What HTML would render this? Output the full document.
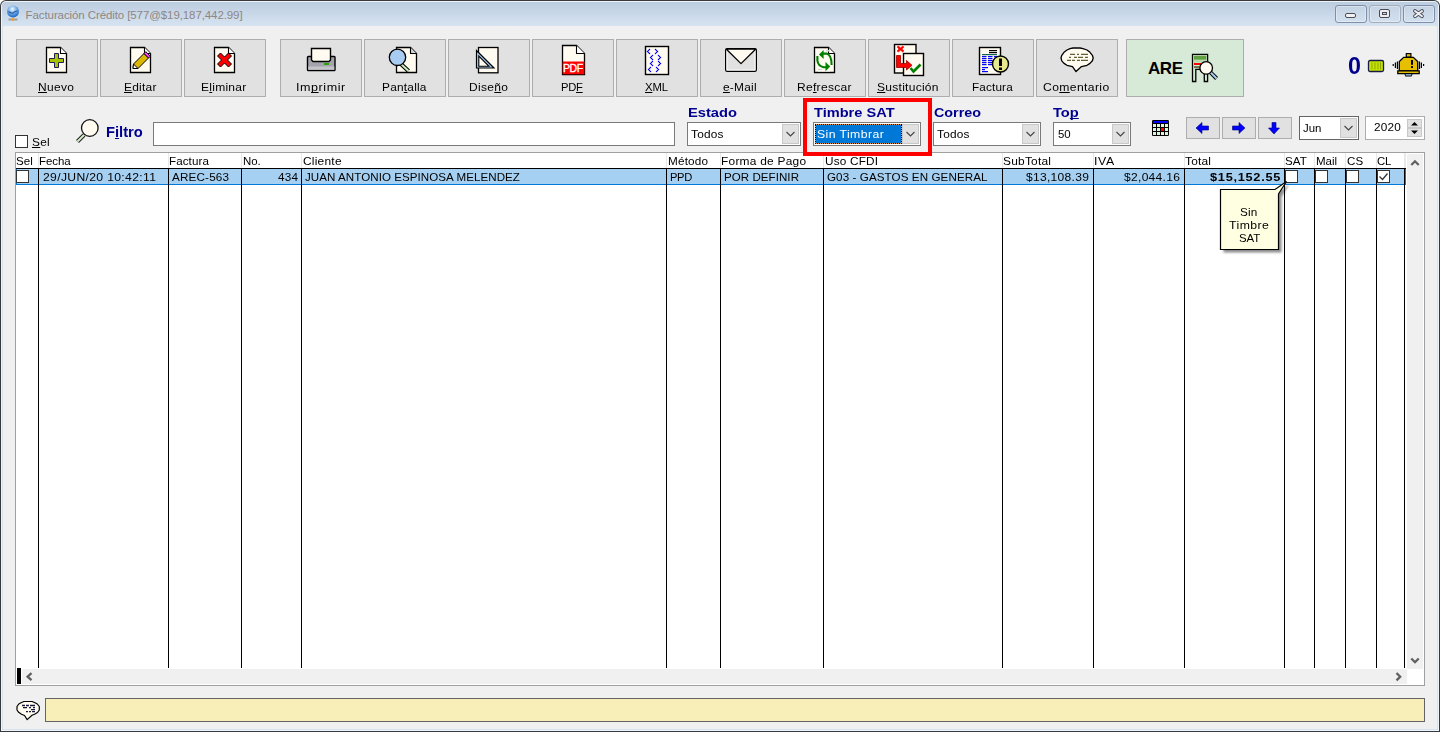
<!DOCTYPE html>
<html><head><meta charset="utf-8">
<style>
*{box-sizing:border-box;margin:0;padding:0}
html,body{width:1440px;height:732px;overflow:hidden;background:#fff;font-family:"Liberation Sans",sans-serif;color:#000}
.a{position:absolute}
.t{position:absolute;white-space:nowrap;line-height:20px}
u{text-decoration:underline;text-underline-offset:1px;text-decoration-thickness:1px;text-decoration-skip-ink:none}
svg{overflow:visible}
</style></head><body>
<div class="a" style="left:0;top:0;width:1440px;height:732px;background:#3a3a3a;border-radius:6px 6px 0 0"></div>
<div class="a" style="left:1px;top:1px;width:1438px;height:730px;background:#eef4fb;border-radius:5px 5px 0 0"></div>
<div class="a" style="left:2px;top:2px;width:1436px;height:728px;background:#d6e3f1;border-radius:4px 4px 0 0"></div>
<div class="a" style="left:2px;top:2px;width:1436px;height:24px;background:linear-gradient(#bccde0,#d6e3f1);border-radius:4px 4px 0 0"></div>
<div class="a" style="left:3px;top:26px;width:1434px;height:703px;background:#f0f0f0"></div>
<svg class="a" style="left:6px;top:5px" width="14" height="18" viewBox="0 0 14 18">
<defs><radialGradient id="gl" cx="0.45" cy="0.3" r="0.75"><stop offset="0" stop-color="#f4faff"/><stop offset="0.35" stop-color="#8ec0f0"/><stop offset="0.8" stop-color="#2f78d0"/><stop offset="1" stop-color="#1c4f9c"/></radialGradient></defs>
<circle cx="7" cy="6.5" r="6" fill="url(#gl)"/>
<path d="M2.5 6.5 Q5 8.5 7 8 Q9 6 11.5 6" stroke="#1a4a90" stroke-width="1.2" fill="none" opacity="0.8"/>
<rect x="2.5" y="13.5" width="9" height="2" fill="#a0a0a0"/><circle cx="7" cy="14.5" r="1.4" fill="#f0a030"/>
</svg>
<div class="t" style="left:25.60px;top:5px;font-size:11.5px;letter-spacing:-0.096px;color:#8e8683;">Facturación Crédito [577@$19,187,442.99]</div>
<div class="a" style="left:1335px;top:5px;width:32px;height:18px;border:1px solid #7f8fa9;border-radius:3px;background:linear-gradient(#c4d3e4,#d3e0ee);box-shadow:inset 0 0 0 1px rgba(255,255,255,0.35)"></div>
<div class="a" style="left:1369px;top:5px;width:32px;height:18px;border:1px solid #a3adba;border-radius:3px;background:linear-gradient(#c4d3e4,#d3e0ee);box-shadow:inset 0 0 0 1px rgba(255,255,255,0.35)"></div>
<div class="a" style="left:1403px;top:5px;width:32px;height:18px;border:1px solid #7f8fa9;border-radius:3px;background:linear-gradient(#c4d3e4,#d3e0ee);box-shadow:inset 0 0 0 1px rgba(255,255,255,0.35)"></div>
<svg class="a" style="left:1335px;top:5px" width="100" height="18" viewBox="0 0 100 18">
<rect x="10.5" y="8.5" width="10" height="4" rx="1.5" fill="#f2f2f2" stroke="#4a4c5a" stroke-width="1"/>
<rect x="44.5" y="4.5" width="10" height="8" rx="1.5" fill="#ececec" stroke="#4a4c5a" stroke-width="1"/>
<rect x="47.5" y="7.5" width="4" height="2" fill="#c8d8ea" stroke="#4a4c5a" stroke-width="1"/>
<path d="M80 6 L87 11.2 M87 6 L80 11.2" stroke="#4a4c5a" stroke-width="3.8" stroke-linecap="round"/>
<path d="M80 6 L87 11.2 M87 6 L80 11.2" stroke="#f0f0f0" stroke-width="2" stroke-linecap="round"/>
</svg>
<div class="a" style="left:16px;top:39px;width:82px;height:58px;border:1px solid #adadad;background:#e1e1e1"></div>
<div class="t" style="left:37.90px;top:77px;font-size:11.5px;letter-spacing:0.330px;color:#000;transform:scaleX(1.0414);transform-origin:0 0;"><u>N</u>uevo</div>
<div class="a" style="left:100px;top:39px;width:82px;height:58px;border:1px solid #adadad;background:#e1e1e1"></div>
<div class="t" style="left:124.20px;top:77px;font-size:11.5px;letter-spacing:0.222px;color:#000;transform:scaleX(1.0383);transform-origin:0 0;"><u>E</u>ditar</div>
<div class="a" style="left:184px;top:39px;width:82px;height:58px;border:1px solid #adadad;background:#e1e1e1"></div>
<div class="t" style="left:201.20px;top:77px;font-size:11.5px;letter-spacing:0.253px;color:#000;transform:scaleX(1.0446);transform-origin:0 0;">E<u>l</u>iminar</div>
<div class="a" style="left:280px;top:39px;width:82px;height:58px;border:1px solid #adadad;background:#e1e1e1"></div>
<div class="t" style="left:295.50px;top:77px;font-size:11.5px;letter-spacing:0.497px;color:#000;transform:scaleX(1.0916);transform-origin:0 0;">Im<u>p</u>rimir</div>
<div class="a" style="left:364px;top:39px;width:82px;height:58px;border:1px solid #adadad;background:#e1e1e1"></div>
<div class="t" style="left:382.20px;top:77px;font-size:11.5px;letter-spacing:0.199px;color:#000;transform:scaleX(1.0345);transform-origin:0 0;">Pan<u>t</u>alla</div>
<div class="a" style="left:448px;top:39px;width:82px;height:58px;border:1px solid #adadad;background:#e1e1e1"></div>
<div class="t" style="left:469.00px;top:77px;font-size:11.5px;letter-spacing:0.302px;color:#000;transform:scaleX(1.0441);transform-origin:0 0;">Dise<u>ñ</u>o</div>
<div class="a" style="left:532px;top:39px;width:82px;height:58px;border:1px solid #adadad;background:#e1e1e1"></div>
<div class="t" style="left:561.40px;top:77px;font-size:11.5px;letter-spacing:-0.282px;color:#000;transform:scaleX(0.9761);transform-origin:0 0;">PD<u>F</u></div>
<div class="a" style="left:616px;top:39px;width:82px;height:58px;border:1px solid #adadad;background:#e1e1e1"></div>
<div class="t" style="left:644.75px;top:77px;font-size:11.5px;letter-spacing:-0.158px;color:#000;transform:scaleX(0.9868);transform-origin:0 0;"><u>X</u>ML</div>
<div class="a" style="left:700px;top:39px;width:82px;height:58px;border:1px solid #adadad;background:#e1e1e1"></div>
<div class="t" style="left:723.30px;top:77px;font-size:11.5px;letter-spacing:0.215px;color:#000;transform:scaleX(1.0355);transform-origin:0 0;"><u>e</u>-Mail</div>
<div class="a" style="left:784px;top:39px;width:82px;height:58px;border:1px solid #adadad;background:#e1e1e1"></div>
<div class="t" style="left:797.10px;top:77px;font-size:11.5px;letter-spacing:0.276px;color:#000;transform:scaleX(1.0464);transform-origin:0 0;">Re<u>f</u>rescar</div>
<div class="a" style="left:868px;top:39px;width:82px;height:58px;border:1px solid #adadad;background:#e1e1e1"></div>
<div class="t" style="left:877.00px;top:77px;font-size:11.5px;letter-spacing:0.251px;color:#000;transform:scaleX(1.0467);transform-origin:0 0;"><u>S</u>ustitución</div>
<div class="a" style="left:952px;top:39px;width:82px;height:58px;border:1px solid #adadad;background:#e1e1e1"></div>
<div class="t" style="left:971.70px;top:77px;font-size:11.5px;letter-spacing:0.137px;color:#000;transform:scaleX(1.0214);transform-origin:0 0;">Factura</div>
<div class="a" style="left:1036px;top:39px;width:82px;height:58px;border:1px solid #adadad;background:#e1e1e1"></div>
<div class="t" style="left:1043.40px;top:77px;font-size:11.5px;letter-spacing:0.352px;color:#000;transform:scaleX(1.0563);transform-origin:0 0;">Co<u>m</u>entario</div>
<div class="a" style="left:1126px;top:39px;width:118px;height:58px;border:1px solid #adadad;background:#d7ead7"></div>
<div class="t" style="left:1148.00px;top:59px;font-size:17px;letter-spacing:-0.438px;color:#000;font-weight:bold;">ARE</div>
<svg class="a" style="left:46px;top:47px" width="21" height="26" viewBox="0 0 21 26"><path d="M0.5 0.5 H14.5 L20.5 6.5 V25.5 H0.5 Z" fill="#fffbf0" stroke="#000" stroke-width="1.3"/><path d="M14.5 0.5 V6.5 H20.5" fill="#fff" stroke="#000" stroke-width="1.1"/><path d="M8.5 6.5 h4 v5 h5 v4 h-5 v5 h-4 v-5 h-5 v-4 h5 z" fill="#a8c400" stroke="#1c1c5c" stroke-width="1"/></svg>
<svg class="a" style="left:130px;top:47px" width="21" height="26" viewBox="0 0 21 26"><path d="M0.5 0.5 H14.5 L20.5 6.5 V25.5 H0.5 Z" fill="#fffbf0" stroke="#000" stroke-width="1.3"/><path d="M14.5 0.5 V6.5 H20.5" fill="#fff" stroke="#000" stroke-width="1.1"/><path d="M3 21.5 L3.5 17 L14 6.5 L18.5 11 L8 21.5 Z" fill="#dcb800" stroke="#000" stroke-width="1"/><path d="M14 6.5 L15.8 4.7 L20.3 9.2 L18.5 11 Z" fill="#ff40ff" stroke="#000" stroke-width="1"/><path d="M3 21.5 L3.5 17 L8 21.5 Z" fill="#fff" stroke="#000" stroke-width="1"/></svg>
<svg class="a" style="left:214px;top:47px" width="21" height="26" viewBox="0 0 21 26"><path d="M0.5 0.5 H14.5 L20.5 6.5 V25.5 H0.5 Z" fill="#fffbf0" stroke="#000" stroke-width="1.3"/><path d="M14.5 0.5 V6.5 H20.5" fill="#fff" stroke="#000" stroke-width="1.1"/><path d="M3.5 7 L6.5 4 L10.5 8 L14.5 4 L17.5 7 L13.5 11 L17.5 15 L14.5 18 L10.5 14 L6.5 18 L3.5 15 L7.5 11 Z" transform="translate(0,2)" fill="#ff0000" stroke="#000" stroke-width="1"/></svg>
<svg class="a" style="left:306px;top:47px" width="31" height="25" viewBox="0 0 31 25"><rect x="1.5" y="9.5" width="27.5" height="14" rx="0.8" fill="#a4a4ac" stroke="#000" stroke-width="1.4"/><rect x="2.3" y="19.5" width="26" height="3.3" fill="#c4c4c8"/><path d="M5.5 1.5 H24.5 V13 L23 14.5 H7 L5.5 13 Z" fill="#fffbf0" stroke="#000" stroke-width="1.4"/><rect x="18" y="16" width="5" height="2" fill="#30a010"/></svg>
<svg class="a" style="left:387px;top:46px" width="31" height="28" viewBox="0 0 31 28"><path d="M9.5 1.5 H23.5 L29.5 7.5 V26.5 H9.5 Z" fill="#fffbf0" stroke="#000" stroke-width="1.3"/><path d="M23.5 1.5 V7.5 H29.5" fill="#d4d4d4" stroke="#000" stroke-width="1.1"/><path d="M13.5 17.5 L21.5 25" stroke="#000" stroke-width="4.2"/><path d="M13.5 17.5 L21.5 25" stroke="#c8ecc0" stroke-width="2"/><circle cx="10.5" cy="11.3" r="8.2" fill="#a8ccf2" stroke="#000" stroke-width="1.3"/></svg>
<svg class="a" style="left:475px;top:46px" width="25" height="28" viewBox="0 0 25 28"><rect x="3.5" y="1.5" width="19.5" height="25.3" fill="#fffbf0" stroke="#000" stroke-width="1.3"/><path d="M1.5 4.5 L1.5 22 L19 22 Z" fill="#a8cff5" stroke="#000" stroke-width="1.2"/><path d="M3.8 10 L3.8 20.3 L14 20.3 Z" fill="#fffbf0" stroke="#000" stroke-width="1.1"/></svg>
<svg class="a" style="left:561px;top:44px" width="25" height="32" viewBox="0 0 25 32"><path d="M1.5 1.5 H15.5 L23.5 9.5 V30.5 H1.5 Z" fill="#fffbf0" stroke="#000" stroke-width="1.3"/><path d="M15.5 1.5 V9.5 H23.5" fill="#fff" stroke="#000" stroke-width="1.1"/><rect x="1.7" y="17.5" width="21.6" height="12.8" fill="#ff0000"/><text x="11.8" y="27.8" text-anchor="middle" font-family="Liberation Sans" font-size="10.5" fill="#fff" stroke="#fff" stroke-width="0.3" letter-spacing="-0.5">PDF</text></svg>
<svg class="a" style="left:644px;top:45px" width="26" height="31" viewBox="0 0 26 31"><rect x="1.5" y="1.5" width="23" height="28" fill="#fffbf0" stroke="#000" stroke-width="1.4"/><rect x="4.85" y="3.85" width="1.3" height="1.3" fill="#0000ff"/><rect x="10.85" y="3.85" width="1.3" height="1.3" fill="#0000ff"/><rect x="3.85" y="4.85" width="1.3" height="1.3" fill="#0000ff"/><rect x="11.85" y="4.85" width="1.3" height="1.3" fill="#0000ff"/><rect x="2.85" y="5.85" width="1.3" height="1.3" fill="#0000ff"/><rect x="12.85" y="5.85" width="1.3" height="1.3" fill="#0000ff"/><rect x="3.85" y="6.85" width="1.3" height="1.3" fill="#0000ff"/><rect x="11.85" y="6.85" width="1.3" height="1.3" fill="#0000ff"/><rect x="4.85" y="7.85" width="1.3" height="1.3" fill="#0000ff"/><rect x="10.85" y="7.85" width="1.3" height="1.3" fill="#0000ff"/><rect x="7.85" y="9.85" width="1.3" height="1.3" fill="#0000ff"/><rect x="13.85" y="9.85" width="1.3" height="1.3" fill="#0000ff"/><rect x="6.85" y="10.85" width="1.3" height="1.3" fill="#0000ff"/><rect x="14.85" y="10.85" width="1.3" height="1.3" fill="#0000ff"/><rect x="5.85" y="11.85" width="1.3" height="1.3" fill="#0000ff"/><rect x="15.85" y="11.85" width="1.3" height="1.3" fill="#0000ff"/><rect x="6.85" y="12.85" width="1.3" height="1.3" fill="#0000ff"/><rect x="14.85" y="12.85" width="1.3" height="1.3" fill="#0000ff"/><rect x="7.85" y="13.85" width="1.3" height="1.3" fill="#0000ff"/><rect x="13.85" y="13.85" width="1.3" height="1.3" fill="#0000ff"/><rect x="7.85" y="15.85" width="1.3" height="1.3" fill="#0000ff"/><rect x="13.85" y="15.85" width="1.3" height="1.3" fill="#0000ff"/><rect x="6.85" y="16.85" width="1.3" height="1.3" fill="#0000ff"/><rect x="14.85" y="16.85" width="1.3" height="1.3" fill="#0000ff"/><rect x="5.85" y="17.85" width="1.3" height="1.3" fill="#0000ff"/><rect x="15.85" y="17.85" width="1.3" height="1.3" fill="#0000ff"/><rect x="6.85" y="18.85" width="1.3" height="1.3" fill="#0000ff"/><rect x="14.85" y="18.85" width="1.3" height="1.3" fill="#0000ff"/><rect x="7.85" y="19.85" width="1.3" height="1.3" fill="#0000ff"/><rect x="13.85" y="19.85" width="1.3" height="1.3" fill="#0000ff"/><rect x="5.85" y="21.85" width="1.3" height="1.3" fill="#0000ff"/><rect x="11.85" y="21.85" width="1.3" height="1.3" fill="#0000ff"/><rect x="4.85" y="22.85" width="1.3" height="1.3" fill="#0000ff"/><rect x="12.85" y="22.85" width="1.3" height="1.3" fill="#0000ff"/><rect x="3.85" y="23.85" width="1.3" height="1.3" fill="#0000ff"/><rect x="13.85" y="23.85" width="1.3" height="1.3" fill="#0000ff"/><rect x="4.85" y="24.85" width="1.3" height="1.3" fill="#0000ff"/><rect x="12.85" y="24.85" width="1.3" height="1.3" fill="#0000ff"/><rect x="5.85" y="25.85" width="1.3" height="1.3" fill="#0000ff"/><rect x="11.85" y="25.85" width="1.3" height="1.3" fill="#0000ff"/></svg>
<svg class="a" style="left:724px;top:47px" width="35" height="26" viewBox="0 0 35 26"><rect x="1.7" y="1.7" width="30.6" height="22.6" rx="1.5" fill="#e1e1e1" stroke="#000" stroke-width="1.4"/><rect x="2.9" y="2.9" width="28.2" height="20.2" fill="none" stroke="#fff" stroke-width="1"/><path d="M2.4 2.2 L17 16.6 L31.6 2.2 Z" fill="#fffbf0" stroke="#000" stroke-width="1.3" stroke-linejoin="round"/></svg>
<svg class="a" style="left:814px;top:47px" width="21" height="26" viewBox="0 0 21 26"><path d="M0.5 0.5 H14.5 L20.5 6.5 V25.5 H0.5 Z" fill="#fffbf0" stroke="#000" stroke-width="1.3"/><path d="M14.5 0.5 V6.5 H20.5" fill="#fff" stroke="#000" stroke-width="1.1"/><path d="M3 28" /><rect x="4" y="22" width="4" height="1" fill="#d0d0d0"/><rect x="4" y="24" width="12" height="1" fill="#d8d8d8"/><rect x="12" y="3" width="4" height="1.5" fill="#d8d8d8"/><path d="M5 7.4 L9.6 2.9 V12 Z" fill="#008000"/><path d="M9 6.6 H12.5 Q17.6 8 17.6 18" stroke="#008000" stroke-width="2.1" fill="none"/><path d="M3.4 9 V13.5 Q4 19 9.5 20.2 H12" stroke="#008000" stroke-width="2.1" fill="none"/><path d="M16.2 19.5 L11.5 15 V24.2 Z" fill="#008000"/></svg>
<svg class="a" style="left:893px;top:43px" width="32" height="34" viewBox="0 0 32 34"><rect x="1.5" y="1.5" width="21.5" height="28.5" fill="#fffbf0" stroke="#000" stroke-width="1.4"/><path d="M4 4 L5.5 3 L7.5 5 L9.5 3 L11 4 L9 6 L11 8 L9.5 9 L7.5 7 L5.5 9 L4 8 L6 6 Z" fill="#ff0000" stroke="#ff0000" stroke-width="0.6"/><rect x="10.5" y="10.5" width="20" height="22" fill="#fffbf0" stroke="#000" stroke-width="1.4"/><path d="M3.5 12.5 H7.5 V20.5 H13.5 V17.5 L19 22.3 L13.5 27 V24.5 H3.5 Z" fill="#ff0000" stroke="#900" stroke-width="0.8"/><path d="M17.5 25 L20.5 28.5 L27.5 21.5" stroke="#008000" stroke-width="2.6" fill="none"/></svg>
<svg class="a" style="left:978px;top:46px" width="36" height="30" viewBox="0 0 36 30"><rect x="1.5" y="1.5" width="21" height="27" fill="#fffbf0" stroke="#000" stroke-width="1.4"/><rect x="11" y="4" width="8" height="1.2" fill="#000"/><rect x="11" y="6" width="8" height="1.2" fill="#000"/><rect x="4" y="8" width="15" height="1.2" fill="#106060"/><rect x="4" y="10" width="4.5" height="1.2" fill="#0000ff"/><rect x="10" y="10" width="4.5" height="1.2" fill="#0000ff"/><rect x="16" y="10" width="4.5" height="1.2" fill="#0000ff"/><rect x="4" y="12" width="4.5" height="1.2" fill="#0000ff"/><rect x="10" y="12" width="4.5" height="1.2" fill="#0000ff"/><rect x="16" y="12" width="4.5" height="1.2" fill="#0000ff"/><rect x="4" y="14" width="4.5" height="1.2" fill="#0000ff"/><rect x="10" y="14" width="4.5" height="1.2" fill="#0000ff"/><rect x="16" y="14" width="4.5" height="1.2" fill="#0000ff"/><rect x="4" y="16" width="4.5" height="1.2" fill="#0000ff"/><rect x="10" y="16" width="4.5" height="1.2" fill="#0000ff"/><rect x="16" y="16" width="4.5" height="1.2" fill="#0000ff"/><rect x="4" y="18" width="4.5" height="1.2" fill="#0000ff"/><rect x="10" y="18" width="4.5" height="1.2" fill="#0000ff"/><rect x="16" y="18" width="4.5" height="1.2" fill="#0000ff"/><rect x="4" y="21" width="6" height="1.2" fill="#0000ff"/><rect x="4" y="23" width="3" height="1.2" fill="#0000ff"/><rect x="4" y="25" width="6" height="1.2" fill="#0000ff"/><circle cx="22.5" cy="18" r="8" fill="#e8e890" stroke="#000" stroke-width="1.4"/><rect x="21" y="12.5" width="3" height="7.5" fill="#000"/><rect x="21" y="21.5" width="3" height="2.5" fill="#000"/></svg>
<svg class="a" style="left:1060px;top:46px" width="35" height="27" viewBox="0 0 35 27"><path d="M13 2 H20 L23 2.6 L27 4 L30 6.3 L32.4 9.3 L33.2 12 L32.4 14.8 L30 17.4 L27 19.3 L21.5 20.6 L16 25.6 L12.5 20.6 L7 19.3 L4 17.4 L1.8 14.8 L1 12 L1.8 9.3 L4 6.3 L7 4 L10 2.6 Z" fill="#fffbf0" stroke="#000" stroke-width="1.3" stroke-linejoin="round"/><path d="M10 8.3 H15 M17 8.3 H19 M21 8.3 H28 M9 11.4 H11 M14 11.4 H17 M18 11.4 H23 M25 11.4 H28 M7 14.4 H11 M12 14.4 H15 M17 14.4 H20 M21 14.4 H28" stroke="#62603a" stroke-width="1.3"/></svg>
<svg class="a" style="left:1190px;top:52px" width="30" height="32" viewBox="0 0 30 32"><path d="M2.5 2.3 H17.6 V29.5 H14.3 V17.3 H5.8 V29.5 H2.5 Z" fill="#cfe9cc" stroke="#000" stroke-width="1.3"/><rect x="4" y="3.7" width="12.3" height="4" fill="#60a040"/><rect x="4" y="8" width="12.3" height="2.5" fill="#b8d8b0"/><rect x="4" y="11" width="7" height="2" fill="#ff0000"/><rect x="4" y="14.2" width="7" height="1.7" fill="#606040"/><path d="M20.5 20.3 L26.6 26.5" stroke="#000" stroke-width="4"/><path d="M20.5 20.3 L26.6 26.5" stroke="#a8ccf2" stroke-width="2"/><circle cx="16.2" cy="15.9" r="6.3" fill="#fffbf0" stroke="#000" stroke-width="1.3"/></svg>
<div class="t" style="left:1348.25px;top:57px;font-size:22px;letter-spacing:0.000px;color:#00008c;font-weight:bold;transform:scale(1.06,1.07);transform-origin:0 100%;">0</div>
<svg class="a" style="left:1367px;top:59px" width="18" height="14" viewBox="0 0 18 14"><rect x="1.5" y="1.5" width="15" height="11" rx="1.5" fill="#c4e400" stroke="#1a1a48" stroke-width="1.3"/><rect x="4.5" y="3.5" width="0.9" height="7" fill="#8aa000"/><rect x="7.5" y="3.5" width="0.9" height="7" fill="#8aa000"/><rect x="10.5" y="3.5" width="0.9" height="7" fill="#8aa000"/><rect x="13" y="3.5" width="0.9" height="7" fill="#8aa000"/></svg>
<svg class="a" style="left:1391px;top:52px" width="36" height="26" viewBox="0 0 36 26"><path d="M12.7 5.3 H22.3 L26.7 9.6 V19 H8.3 V9.6 Z" fill="#e6c000" stroke="#000" stroke-width="1.3" stroke-linejoin="miter"/><rect x="15.3" y="1.6" width="4.6" height="3.4" fill="#e6c000" stroke="#000" stroke-width="1.2"/><rect x="6.8" y="18.9" width="21.4" height="2.7" fill="#f0c800" stroke="#000" stroke-width="1.3"/><path d="M13.2 21.6 H21.8 L20.6 24.4 H14.4 Z" fill="#000"/><rect x="14.6" y="22.2" width="5.8" height="1.3" fill="#a8ccf0"/><rect x="20" y="8" width="2" height="4.8" fill="#000"/><rect x="20" y="14.1" width="2" height="1.9" fill="#000"/><rect x="1.6" y="12" width="1.2" height="2" fill="#000"/><rect x="3.8" y="10.5" width="1.2" height="5.5" fill="#000"/><rect x="5.8" y="9.5" width="1.2" height="7.5" fill="#000"/><rect x="27.9" y="9.5" width="1.2" height="7.5" fill="#000"/><rect x="29.8" y="10.5" width="1.2" height="5.5" fill="#000"/><rect x="32" y="12" width="1.2" height="2" fill="#000"/></svg>
<div class="a" style="left:15px;top:135px;width:13px;height:13px;border:1px solid #333;background:#fff;"></div>
<div class="t" style="left:32.00px;top:132px;font-size:11.5px;letter-spacing:0.272px;color:#000;transform:scaleX(1.0338);transform-origin:0 0;"><u>S</u>el</div>
<svg class="a" style="left:74px;top:117px" width="28" height="28" viewBox="0 0 28 28"><path d="M3.5 24.5 L10 18" stroke="#222" stroke-width="4" /><path d="M3.5 24.5 L10 18" stroke="#d4ecc8" stroke-width="2"/><circle cx="15.8" cy="11" r="8.3" fill="#fffbf0" stroke="#111" stroke-width="1.3"/></svg>
<div class="t" style="left:106.00px;top:122px;font-size:14px;letter-spacing:0.000px;color:#000090;font-weight:bold;transform:scaleX(1.0500);transform-origin:0 0;">F<u>i</u>ltro</div>
<div class="a" style="left:153px;top:122px;width:522px;height:24px;border:1px solid #7a7a7a;background:#fff"></div>
<div class="t" style="left:687.80px;top:103px;font-size:13px;letter-spacing:0.000px;color:#000090;font-weight:bold;transform:scaleX(1.1297);transform-origin:0 0;">Estado</div>
<div class="a" style="left:687px;top:122px;width:114px;height:24px;border:1px solid #7a7a7a;background:#fff"></div>
<div class="a" style="left:782px;top:124px;width:17px;height:20px;border:1px solid #c8c8c8;background:#e1e1e1"></div>
<svg class="a" style="left:782px;top:124px" width="17" height="20" viewBox="0 0 17 20"><path d="M4.5 8.0 L8.5 12.0 L12.5 8.0" stroke="#444" stroke-width="1.1" fill="none"/></svg>
<div class="t" style="left:691.30px;top:124px;font-size:11.5px;letter-spacing:0.224px;color:#000;transform:scaleX(1.0301);transform-origin:0 0;">Todos</div>
<div class="t" style="left:813.75px;top:103px;font-size:13px;letter-spacing:0.000px;color:#000090;font-weight:bold;transform:scaleX(1.1233);transform-origin:0 0;">Timbre SAT</div>
<div class="a" style="left:813px;top:122px;width:108px;height:24px;border:1px solid #7a7a7a;background:#fff"></div>
<div class="a" style="left:902px;top:124px;width:17px;height:20px;border:1px solid #c8c8c8;background:#e1e1e1"></div>
<svg class="a" style="left:902px;top:124px" width="17" height="20" viewBox="0 0 17 20"><path d="M4.5 8.0 L8.5 12.0 L12.5 8.0" stroke="#444" stroke-width="1.1" fill="none"/></svg>
<div class="a" style="left:815px;top:124px;width:87px;height:20px;background:#e89a3a"></div>
<div class="a" style="left:815px;top:124px;width:87px;height:20px;background:#0078d7;background-clip:padding-box;border:1px dotted #000"></div>
<div class="t" style="left:817.30px;top:124px;font-size:11.5px;letter-spacing:0.372px;color:#fff;transform:scaleX(1.0677);transform-origin:0 0;">Sin Timbrar</div>
<div class="t" style="left:934.00px;top:103px;font-size:13px;letter-spacing:0.000px;color:#000090;font-weight:bold;transform:scaleX(1.1026);transform-origin:0 0;">Correo</div>
<div class="a" style="left:933px;top:122px;width:108px;height:24px;border:1px solid #7a7a7a;background:#fff"></div>
<div class="a" style="left:1022px;top:124px;width:17px;height:20px;border:1px solid #c8c8c8;background:#e1e1e1"></div>
<svg class="a" style="left:1022px;top:124px" width="17" height="20" viewBox="0 0 17 20"><path d="M4.5 8.0 L8.5 12.0 L12.5 8.0" stroke="#444" stroke-width="1.1" fill="none"/></svg>
<div class="t" style="left:937.10px;top:124px;font-size:11.5px;letter-spacing:0.224px;color:#000;transform:scaleX(1.0301);transform-origin:0 0;">Todos</div>
<div class="t" style="left:1053.10px;top:103px;font-size:13px;letter-spacing:0.000px;color:#000090;font-weight:bold;transform:scaleX(1.1279);transform-origin:0 0;">To<u>p</u></div>
<div class="a" style="left:1053px;top:122px;width:78px;height:24px;border:1px solid #7a7a7a;background:#fff"></div>
<div class="a" style="left:1112px;top:124px;width:17px;height:20px;border:1px solid #c8c8c8;background:#e1e1e1"></div>
<svg class="a" style="left:1112px;top:124px" width="17" height="20" viewBox="0 0 17 20"><path d="M4.5 8.0 L8.5 12.0 L12.5 8.0" stroke="#444" stroke-width="1.1" fill="none"/></svg>
<div class="t" style="left:1057.60px;top:124px;font-size:11.5px;letter-spacing:-0.075px;color:#000;transform:scaleX(0.9941);transform-origin:0 0;">50</div>
<svg class="a" style="left:1152px;top:120px" width="17" height="16" viewBox="0 0 17 16"><rect x="0" y="0" width="17" height="16" rx="1.2" fill="#000"/><rect x="1" y="1" width="15" height="2" fill="#0000ff"/><rect x="1" y="4" width="3" height="3" fill="#dcf4d8"/><rect x="5" y="4" width="3" height="3" fill="#dcf4d8"/><rect x="9" y="4" width="3" height="3" fill="#dcf4d8"/><rect x="13" y="4" width="3" height="3" fill="#dcf4d8"/><rect x="1" y="8" width="3" height="3" fill="#dcf4d8"/><rect x="5" y="8" width="3" height="3" fill="#dcf4d8"/><rect x="9" y="8" width="3" height="3" fill="#ff0000"/><rect x="13" y="8" width="3" height="3" fill="#dcf4d8"/><rect x="1" y="12" width="3" height="3" fill="#dcf4d8"/><rect x="5" y="12" width="3" height="3" fill="#dcf4d8"/><rect x="9" y="12" width="3" height="3" fill="#dcf4d8"/><rect x="13" y="12" width="3" height="3" fill="#dcf4d8"/></svg>
<div class="a" style="left:1186px;top:117px;width:34px;height:22px;border:1px solid #adadad;background:#e1e1e1"></div>
<div class="a" style="left:1222px;top:117px;width:34px;height:22px;border:1px solid #adadad;background:#e1e1e1"></div>
<div class="a" style="left:1258px;top:117px;width:34px;height:22px;border:1px solid #adadad;background:#e1e1e1"></div>
<svg class="a" style="left:1186px;top:117px" width="106" height="22" viewBox="0 0 106 22"><path d="M10 11 L16 5.5 V9 H22.5 V13 H16 V16.5 Z" fill="#0000ff" stroke="#000080" stroke-width="0.6"/><path d="M59 11 L53 5.5 V9 H46.5 V13 H53 V16.5 Z" fill="#0000ff" stroke="#000080" stroke-width="0.6"/><path d="M88 17 L82.5 11 H86 V5.5 H90 V11 H93.5 Z" fill="#0000ff" stroke="#000080" stroke-width="0.6"/></svg>
<div class="a" style="left:1299px;top:116px;width:60px;height:24px;border:1px solid #646464;background:#fff"></div>
<div class="a" style="left:1340px;top:118px;width:17px;height:20px;border:1px solid #c8c8c8;background:#e1e1e1"></div>
<svg class="a" style="left:1340px;top:118px" width="17" height="20" viewBox="0 0 17 20"><path d="M4.5 8.0 L8.5 12.0 L12.5 8.0" stroke="#444" stroke-width="1.1" fill="none"/></svg>
<div class="t" style="left:1303.00px;top:118px;font-size:11.5px;letter-spacing:-0.063px;color:#000;transform:scaleX(0.9932);transform-origin:0 0;">Jun</div>
<div class="a" style="left:1365px;top:116px;width:60px;height:24px;border:1px solid #adadad;background:#fff"></div>
<div class="t" style="left:1374.40px;top:117px;font-size:11.5px;letter-spacing:0.199px;color:#000;transform:scaleX(1.0239);transform-origin:0 0;">2020</div>
<div class="a" style="left:1407px;top:119px;width:15px;height:9px;border:1px solid #c8c8c8;background:#e1e1e1"></div>
<div class="a" style="left:1407px;top:128px;width:15px;height:9px;border:1px solid #c8c8c8;background:#e1e1e1"></div>
<svg class="a" style="left:1407px;top:119px" width="15" height="18" viewBox="0 0 15 18"><path d="M4 6.5 L7.5 3 L11 6.5 Z M4 11.5 L7.5 15 L11 11.5 Z" fill="#000"/></svg>
<div class="a" style="left:15px;top:152px;width:1410px;height:534px;border:1px solid #a0a0a0;background:#fff"></div>
<div class="a" style="left:16px;top:168px;width:1390px;height:1px;background:#000"></div>
<div class="a" style="left:1405px;top:153px;width:1px;height:15px;background:#e8e8e8"></div>
<div class="a" style="left:16px;top:169px;width:1390px;height:16px;background:#a6d0f2;border-left:1px solid #0078d7;border-right:1px solid #0078d7;border-bottom:1px solid #0078d7"></div>
<div class="a" style="left:38px;top:169px;width:1px;height:499px;background:#000"></div>
<div class="a" style="left:38px;top:153px;width:1px;height:15px;background:#e8e8e8"></div>
<div class="a" style="left:168px;top:169px;width:1px;height:499px;background:#000"></div>
<div class="a" style="left:168px;top:153px;width:1px;height:15px;background:#e8e8e8"></div>
<div class="a" style="left:241px;top:169px;width:1px;height:499px;background:#000"></div>
<div class="a" style="left:241px;top:153px;width:1px;height:15px;background:#e8e8e8"></div>
<div class="a" style="left:301px;top:169px;width:1px;height:499px;background:#000"></div>
<div class="a" style="left:301px;top:153px;width:1px;height:15px;background:#e8e8e8"></div>
<div class="a" style="left:666px;top:169px;width:1px;height:499px;background:#000"></div>
<div class="a" style="left:666px;top:153px;width:1px;height:15px;background:#e8e8e8"></div>
<div class="a" style="left:720px;top:169px;width:1px;height:499px;background:#000"></div>
<div class="a" style="left:720px;top:153px;width:1px;height:15px;background:#e8e8e8"></div>
<div class="a" style="left:823px;top:169px;width:1px;height:499px;background:#000"></div>
<div class="a" style="left:823px;top:153px;width:1px;height:15px;background:#e8e8e8"></div>
<div class="a" style="left:1002px;top:169px;width:1px;height:499px;background:#000"></div>
<div class="a" style="left:1002px;top:153px;width:1px;height:15px;background:#e8e8e8"></div>
<div class="a" style="left:1093px;top:169px;width:1px;height:499px;background:#000"></div>
<div class="a" style="left:1093px;top:153px;width:1px;height:15px;background:#e8e8e8"></div>
<div class="a" style="left:1184px;top:169px;width:1px;height:499px;background:#000"></div>
<div class="a" style="left:1184px;top:153px;width:1px;height:15px;background:#e8e8e8"></div>
<div class="a" style="left:1284px;top:169px;width:1px;height:499px;background:#000"></div>
<div class="a" style="left:1284px;top:153px;width:1px;height:15px;background:#e8e8e8"></div>
<div class="a" style="left:1314px;top:169px;width:1px;height:499px;background:#000"></div>
<div class="a" style="left:1314px;top:153px;width:1px;height:15px;background:#e8e8e8"></div>
<div class="a" style="left:1345px;top:169px;width:1px;height:499px;background:#000"></div>
<div class="a" style="left:1345px;top:153px;width:1px;height:15px;background:#e8e8e8"></div>
<div class="a" style="left:1376px;top:169px;width:1px;height:499px;background:#000"></div>
<div class="a" style="left:1376px;top:153px;width:1px;height:15px;background:#e8e8e8"></div>
<div class="a" style="left:1404px;top:169px;width:1px;height:499px;background:#000"></div>
<div class="a" style="left:1404px;top:153px;width:1px;height:15px;background:#e8e8e8"></div>
<div class="t" style="left:16.40px;top:151px;font-size:11.5px;letter-spacing:0.044px;color:#000;transform:scaleX(1.0053);transform-origin:0 0;">Sel</div>
<div class="t" style="left:39.40px;top:151px;font-size:11.5px;letter-spacing:-0.028px;color:#000;transform:scaleX(0.9965);transform-origin:0 0;">Fecha</div>
<div class="t" style="left:169.40px;top:151px;font-size:11.5px;letter-spacing:0.072px;color:#000;transform:scaleX(1.0112);transform-origin:0 0;">Factura</div>
<div class="t" style="left:242.60px;top:151px;font-size:11.5px;letter-spacing:-0.044px;color:#000;transform:scaleX(0.9951);transform-origin:0 0;">No.</div>
<div class="t" style="left:302.80px;top:151px;font-size:11.5px;letter-spacing:0.221px;color:#000;transform:scaleX(1.0385);transform-origin:0 0;">Cliente</div>
<div class="t" style="left:667.50px;top:151px;font-size:11.5px;letter-spacing:0.159px;color:#000;transform:scaleX(1.0212);transform-origin:0 0;">Método</div>
<div class="t" style="left:721.25px;top:151px;font-size:11.5px;letter-spacing:0.231px;color:#000;transform:scaleX(1.0363);transform-origin:0 0;">Forma de Pago</div>
<div class="t" style="left:824.60px;top:151px;font-size:11.5px;letter-spacing:0.174px;color:#000;transform:scaleX(1.0248);transform-origin:0 0;">Uso CFDI</div>
<div class="t" style="left:1003.20px;top:151px;font-size:11.5px;letter-spacing:0.224px;color:#000;transform:scaleX(1.0363);transform-origin:0 0;">SubTotal</div>
<div class="t" style="left:1094.40px;top:151px;font-size:11.5px;letter-spacing:0.595px;color:#000;transform:scaleX(1.0718);transform-origin:0 0;">IVA</div>
<div class="t" style="left:1185.40px;top:151px;font-size:11.5px;letter-spacing:0.199px;color:#000;transform:scaleX(1.0340);transform-origin:0 0;">Total</div>
<div class="t" style="left:1285.10px;top:151px;font-size:11.5px;letter-spacing:0.050px;color:#000;transform:scaleX(1.0047);transform-origin:0 0;">SAT</div>
<div class="t" style="left:1315.50px;top:151px;font-size:11.5px;letter-spacing:0.012px;color:#000;transform:scaleX(1.0018);transform-origin:0 0;">Mail</div>
<div class="t" style="left:1346.50px;top:151px;font-size:11.5px;letter-spacing:0.099px;color:#000;transform:scaleX(1.0063);transform-origin:0 0;">CS</div>
<div class="t" style="left:1377.40px;top:151px;font-size:11.5px;letter-spacing:-0.177px;color:#000;transform:scaleX(0.9881);transform-origin:0 0;">CL</div>
<div class="t" style="left:42.50px;top:167px;font-size:11.5px;letter-spacing:0.320px;color:#000;transform:scaleX(1.0567);transform-origin:0 0;">29/JUN/20 10:42:11</div>
<div class="t" style="left:172.20px;top:167px;font-size:11.5px;letter-spacing:0.140px;color:#000;transform:scaleX(1.0182);transform-origin:0 0;">AREC-563</div>
<div class="t" style="left:277.50px;top:167px;font-size:11.5px;letter-spacing:0.184px;color:#000;transform:scaleX(1.0195);transform-origin:0 0;">434</div>
<div class="t" style="left:305.00px;top:167px;font-size:11.5px;letter-spacing:0.051px;color:#000;transform:scaleX(1.0071);transform-origin:0 0;">JUAN ANTONIO ESPINOSA MELENDEZ</div>
<div class="t" style="left:670.30px;top:167px;font-size:11.5px;letter-spacing:-0.367px;color:#000;transform:scaleX(0.9698);transform-origin:0 0;">PPD</div>
<div class="t" style="left:724.40px;top:167px;font-size:11.5px;letter-spacing:0.043px;color:#000;transform:scaleX(1.0059);transform-origin:0 0;">POR DEFINIR</div>
<div class="t" style="left:827.30px;top:167px;font-size:11.5px;letter-spacing:0.079px;color:#000;transform:scaleX(1.0111);transform-origin:0 0;">G03 - GASTOS EN GENERAL</div>
<div class="t" style="left:1026.30px;top:167px;font-size:11.5px;letter-spacing:0.285px;color:#000;transform:scaleX(1.0466);transform-origin:0 0;">$13,108.39</div>
<div class="t" style="left:1124.40px;top:167px;font-size:11.5px;letter-spacing:0.285px;color:#000;transform:scaleX(1.0467);transform-origin:0 0;">$2,044.16</div>
<div class="t" style="left:1209.60px;top:167px;font-size:11.5px;letter-spacing:0.639px;color:#000;font-weight:bold;transform:scaleX(1.1108);transform-origin:0 0;">$15,152.55</div>
<div class="a" style="left:16px;top:170px;width:13px;height:13px;border:1px solid #333;background:#fff;"></div>
<div class="a" style="left:1285px;top:170px;width:13px;height:13px;border:1px solid #333;background:#fff;"></div>
<div class="a" style="left:1315px;top:170px;width:13px;height:13px;border:1px solid #333;background:#fff;"></div>
<div class="a" style="left:1346px;top:170px;width:13px;height:13px;border:1px solid #333;background:#fff;"></div>
<div class="a" style="left:1377px;top:170px;width:13px;height:13px;border:1px solid #333;background:#fff;"></div>
<svg class="a" style="left:1377px;top:170px" width="13" height="13" viewBox="0 0 13 13"><path d="M2.5 6.5 L5.5 9.5 L10.5 3.5" stroke="#333" stroke-width="1.3" fill="none"/></svg>
<div class="a" style="left:1406px;top:153px;width:18px;height:532px;background:#fff"></div>
<div class="a" style="left:1407px;top:154px;width:16px;height:515px;background:#f0f0f0"></div>
<div class="a" style="left:16px;top:669px;width:1391px;height:15px;background:#fff"></div>
<div class="a" style="left:22px;top:669px;width:1385px;height:15px;background:#f0f0f0"></div>
<div class="a" style="left:17px;top:668px;width:4px;height:16px;background:#000"></div>
<svg class="a" style="left:1407px;top:154px" width="16" height="515" viewBox="0 0 16 515"><path d="M4.3 11 L8 7.3 L11.7 11" stroke="#606060" stroke-width="2.3" fill="none"/><path d="M4.3 504.5 L8 508.2 L11.7 504.5" stroke="#606060" stroke-width="2.3" fill="none"/></svg>
<svg class="a" style="left:22px;top:669px" width="1385" height="15" viewBox="0 0 1385 15"><path d="M9.5 4.2 L5.6 7.7 L9.5 11.2" stroke="#606060" stroke-width="2.3" fill="none"/><path d="M1374.5 4 L1378.2 7.7 L1374.5 11.4" stroke="#606060" stroke-width="2.3" fill="none"/></svg>
<svg class="a" style="left:1214px;top:176px" width="80" height="84" viewBox="0 0 80 84"><defs><filter id="sh" x="-20%" y="-20%" width="140%" height="140%"><feGaussianBlur stdDeviation="1.3"/></filter></defs><path d="M9.5 16.5 H64 L75 8.5 L67.5 21 V76.5 H9.5 Z" fill="#000" opacity="0.45" filter="url(#sh)"/><path d="M6.5 13.5 H61 L72.5 5.5 L64.5 18 V73.5 H6.5 Z" fill="#ffffe1" stroke="#000" stroke-width="1.2"/></svg>
<div class="t" style="left:1240.30px;top:202px;font-size:11.5px;letter-spacing:0.165px;color:#000;transform:scaleX(1.0203);transform-origin:0 0;">Sin</div>
<div class="t" style="left:1229.00px;top:215px;font-size:11.5px;letter-spacing:0.425px;color:#000;transform:scaleX(1.0640);transform-origin:0 0;">Timbre</div>
<div class="t" style="left:1238.80px;top:228px;font-size:11.5px;letter-spacing:-0.050px;color:#000;transform:scaleX(0.9953);transform-origin:0 0;">SAT</div>
<div class="a" style="left:803px;top:98px;width:129px;height:58px;border:4px solid #ff0000"></div>
<svg class="a" style="left:16px;top:700px" width="25" height="22" viewBox="0 0 25 22"><path d="M8 1.5 H16 L18.5 2.5 L21.3 4 L23.3 6.5 V10 L21.5 12.5 L18.5 14.2 L16 15.3 L11.2 19.6 L8.5 15.5 L5.5 14.2 L2.7 12.3 L1 10 V6.5 L2.8 4 L5.5 2.5 Z" fill="#fffbf0" stroke="#000" stroke-width="1.2" stroke-linejoin="round"/><path d="M6 5.5 H9 M10 5.5 H13 M14 5.5 H19 M7 7.6 H11 M13 7.6 H15 M17 7.6 H19 M15 9.6 H19 M10 11.6 H12 M13 11.6 H15 M16 11.6 H19" stroke="#181840" stroke-width="1.3"/></svg>
<div class="a" style="left:45px;top:698px;width:1380px;height:24px;background:#f8eeb8;border:1px solid #646464"></div>
</body></html>
